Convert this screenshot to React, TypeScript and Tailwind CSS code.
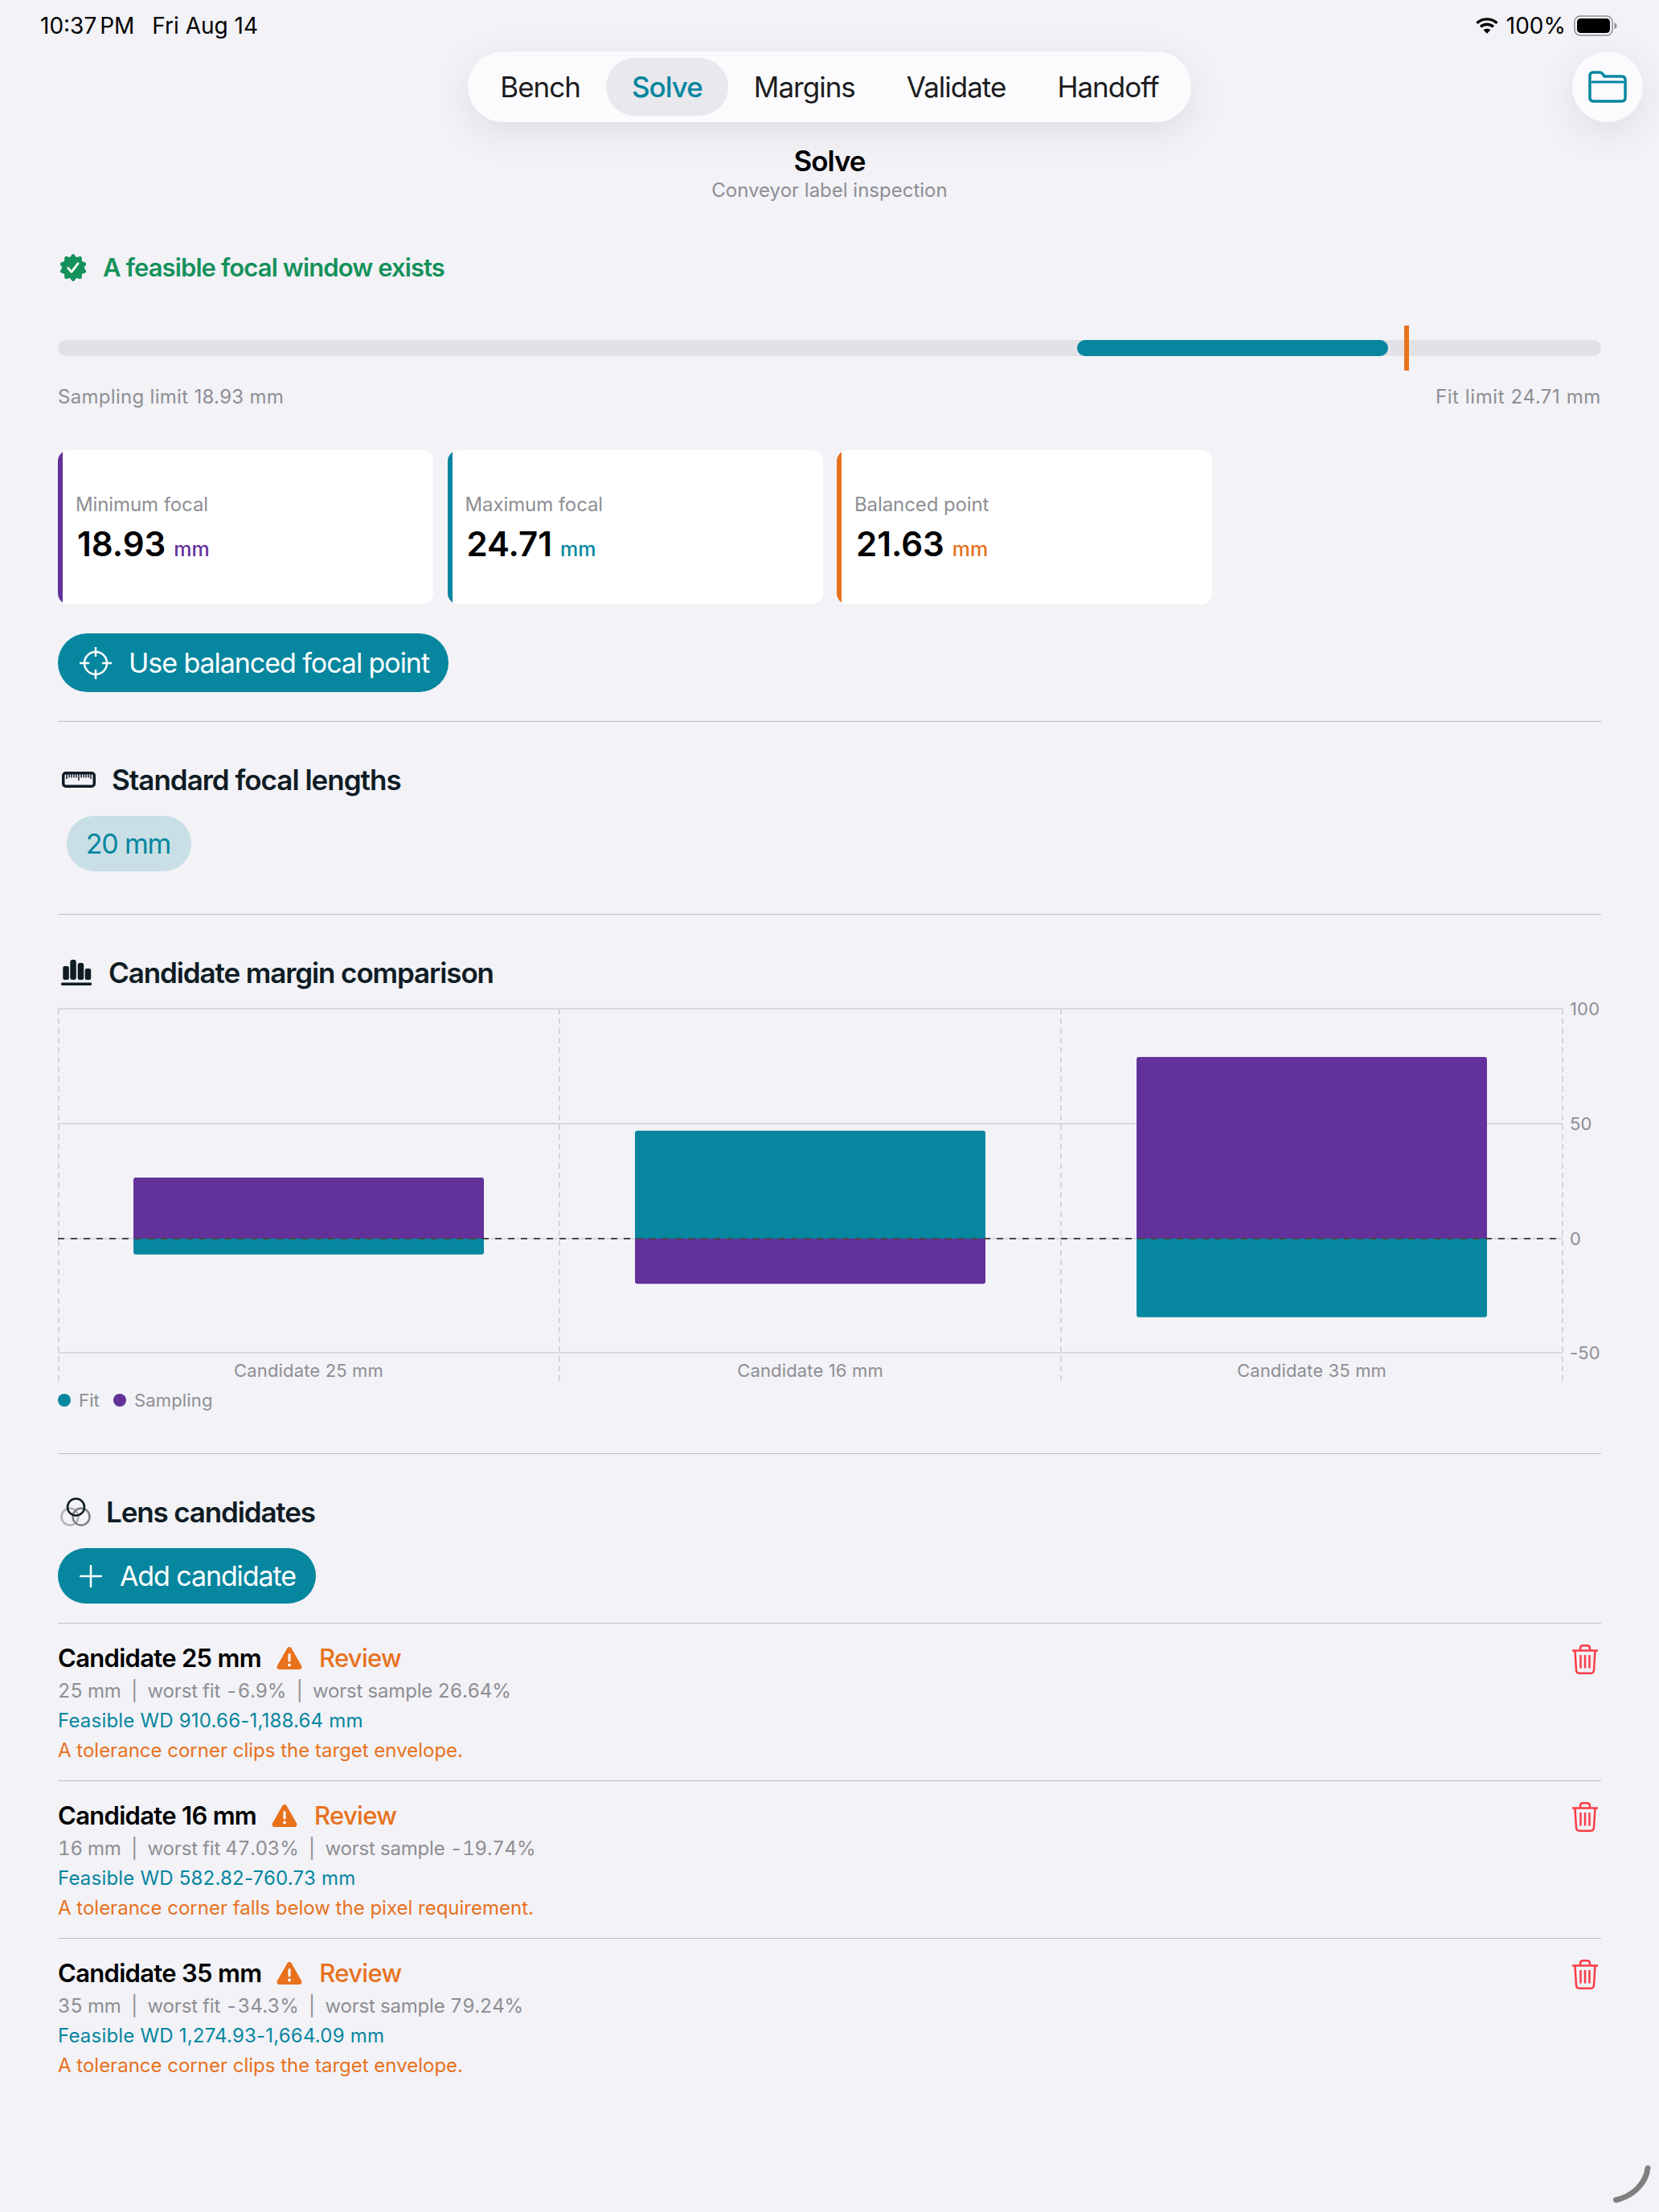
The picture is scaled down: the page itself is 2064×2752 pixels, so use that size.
const TEAL = "#06869f";
const PURPLE = "#63319a";

const tabs = ["Bench", "Solve", "Margins", "Validate", "Handoff"];

const focalCards = [
  { label: "Minimum focal", value: "18.93", strip: "bg-[#63319a]", unit: "text-[#63319a]" },
  { label: "Maximum focal", value: "24.71", strip: "bg-[#06869f]", unit: "text-[#06869f]" },
  { label: "Balanced point", value: "21.63", strip: "bg-[#e8711c]", unit: "text-[#e8711c]" },
];

const candidates = [
  {
    name: "Candidate 25 mm",
    detail: "25 mm  |  worst fit -6.9%  |  worst sample 26.64%",
    feasible: "Feasible WD 910.66-1,188.64 mm",
    note: "A tolerance corner clips the target envelope.",
  },
  {
    name: "Candidate 16 mm",
    detail: "16 mm  |  worst fit 47.03%  |  worst sample -19.74%",
    feasible: "Feasible WD 582.82-760.73 mm",
    note: "A tolerance corner falls below the pixel requirement.",
  },
  {
    name: "Candidate 35 mm",
    detail: "35 mm  |  worst fit -34.3%  |  worst sample 79.24%",
    feasible: "Feasible WD 1,274.93-1,664.09 mm",
    note: "A tolerance corner clips the target envelope.",
  },
];

const chartGroups = [
  { label: "Candidate 25 mm", x: 166, fit: -6.9, sampling: 26.64 },
  { label: "Candidate 16 mm", x: 790, fit: 47.03, sampling: -19.74 },
  { label: "Candidate 35 mm", x: 1414, fit: -34.3, sampling: 79.24 },
];

const ZERO_Y = 1541;
const PX_PER_UNIT = 2.853;

function barPath(x: number, value: number) {
  const w = 436;
  const r = 3;
  const h = Math.abs(value) * PX_PER_UNIT;
  if (value >= 0) {
    const top = ZERO_Y - h;
    return `M${x} ${ZERO_Y}V${top + r}Q${x} ${top} ${x + r} ${top}H${x + w - r}Q${x + w} ${top} ${x + w} ${top + r}V${ZERO_Y}Z`;
  }
  const bottom = ZERO_Y + h;
  return `M${x} ${ZERO_Y}V${bottom - r}Q${x} ${bottom} ${x + r} ${bottom}H${x + w - r}Q${x + w} ${bottom} ${x + w} ${bottom - r}V${ZERO_Y}Z`;
}

function MarginChart() {
  const ticks = [
    { label: "100", y: 1255 },
    { label: "50", y: 1398 },
    { label: "0", y: 1541 },
    { label: "-50", y: 1683 },
  ];
  return (
    <svg width="1920" height="480" viewBox="72 1240 1920 480" className="mt-[8px] block">
      {ticks.map((t) => (
        <line key={t.label} x1="72" x2="1944" y1={t.y} y2={t.y} stroke="#d1d1d6" strokeWidth="1.5" />
      ))}
      {[73, 696, 1320, 1944].map((x) => (
        <line key={x} x1={x} x2={x} y1="1255" y2="1718" stroke="#d5d5d9" strokeWidth="2" strokeDasharray="7 5" />
      ))}
      {chartGroups.map((g) => (
        <g key={g.label}>
          <path d={barPath(g.x, g.fit)} fill={TEAL} />
          <path d={barPath(g.x, g.sampling)} fill={PURPLE} />
          <text x={g.x + 218} y="1713" textAnchor="middle" fontSize="22" letterSpacing="0.15" fill="#8e8e93">
            {g.label}
          </text>
        </g>
      ))}
      <line x1="72" x2="1938" y1="1541" y2="1541" stroke="#48484a" strokeWidth="2" strokeDasharray="8 8" />
      {ticks.map((t) => (
        <text key={t.label} x="1953" y={t.y + 8} fontSize="22" letterSpacing="0.15" fill="#8e8e93">
          {t.label}
        </text>
      ))}
    </svg>
  );
}

// scalloped badge outline, ten lobes with one pointing up
const sealPoints = Array.from({ length: 120 }, (_, i) => {
  const a = (i / 120) * Math.PI * 2;
  const r = 15.3 + 1.6 * Math.cos(10 * a);
  return `${(17 + r * Math.sin(a)).toFixed(2)},${(17 - r * Math.cos(a)).toFixed(2)}`;
}).join(" ");

function SealIcon() {
  return (
    <svg width="34" height="34" viewBox="0 0 34 34" className="block">
      <polygon points={sealPoints} fill="#15915a" />
      <path
        d="M10.800 17.500L15 22.300L23 11.800"
        fill="none"
        stroke="#fff"
        strokeWidth="2.800"
        strokeLinecap="round"
        strokeLinejoin="round"
      />
    </svg>
  );
}

function FolderIcon() {
  return (
    <svg width="48" height="40" viewBox="0 0 48 40" fill="none" stroke="#06869f" strokeWidth="3.500">
      <path d="M2 6.500C2 3.500 3.500 2 6.500 2H14C16 2 17 2.600 18 4L20 7H41.500C44.500 7 46 8.500 46 11.500V33.500C46 36.500 44.500 38 41.500 38H6.500C3.500 38 2 36.500 2 33.500Z" />
      <path d="M5 14H43" strokeWidth="3" strokeLinecap="round" />
    </svg>
  );
}

function WifiIcon() {
  return (
    <svg width="28" height="20" viewBox="0 0 28 20" fill="none" stroke="#000" strokeWidth="3.400">
      <path d="M1.500 6.800C8.500 0.200 19.500 0.200 26.500 6.800" />
      <path d="M6 11.300C10.500 7.200 17.500 7.200 22 11.300" />
      <path d="M14 19.800L9.600 15.200C12 13.200 16 13.200 18.400 15.200Z" fill="#000" stroke="none" />
    </svg>
  );
}

function BatteryIcon() {
  return (
    <svg width="54" height="26" viewBox="0 0 54 26">
      <rect x="1" y="1" width="47" height="24" rx="7" fill="none" stroke="#8e8e93" strokeWidth="1.500" />
      <rect x="4" y="4" width="41" height="18" rx="4.500" fill="#000" />
      <path d="M50.500 9C52.500 9.800 53.500 11 53.500 13C53.500 15 52.500 16.200 50.500 17Z" fill="#8e8e93" />
    </svg>
  );
}

function CrosshairIcon() {
  return (
    <svg width="40" height="40" viewBox="0 0 40 40" fill="none" stroke="#fff" strokeWidth="2.500">
      <circle cx="20" cy="20" r="14" />
      <path d="M20 0V11M20 29V40M0 20H11M29 20H40" strokeLinecap="round" />
    </svg>
  );
}

function RulerIcon() {
  return (
    <svg width="42" height="20" viewBox="0 0 42 20" fill="none" stroke="#0f1c24">
      <rect x="1.750" y="1.750" width="38.500" height="16.500" rx="3" strokeWidth="3.500" />
      <path d="M6 3V9M9 3V7.500M12 3V7.500M15 3V7.500M18 3V7.500M21 3V11M24 3V7.500M27 3V7.500M30 3V7.500M33 3V7.500M36 3V9" strokeWidth="1.500" />
    </svg>
  );
}

function BarsIcon() {
  return (
    <svg width="38" height="32" viewBox="0 0 38 32" fill="#0f1c24">
      <rect x="2.300" y="8" width="7.500" height="17" rx="2" />
      <rect x="11.300" y="0" width="7.500" height="25" rx="3" />
      <rect x="20.700" y="4" width="7.500" height="21" rx="2.500" />
      <rect x="29.700" y="11" width="7.500" height="14" rx="2" />
      <rect x="0" y="28.500" width="38" height="3.500" rx="1.200" />
    </svg>
  );
}

function LensIcon() {
  return (
    <svg width="38" height="36" viewBox="0 0 38 36" fill="none" strokeWidth="2.500">
      <circle cx="12" cy="24" r="10.500" stroke="#b4b4b8" />
      <circle cx="26" cy="24" r="10.500" stroke="#808085" />
      <circle cx="19.500" cy="12" r="10.500" stroke="#0f1c24" />
    </svg>
  );
}

function WarningIcon() {
  return (
    <svg width="32" height="28" viewBox="0 0 32 28" className="block">
      <path
        d="M13.400 1.600C14.600 -0.400 17.400 -0.400 18.600 1.600L31 23.300C32.200 25.300 30.800 28 28.400 28H3.600C1.200 28 -0.200 25.300 1 23.300Z"
        fill="#e8711c"
      />
      <rect x="14.500" y="8" width="3" height="10.500" rx="1.500" fill="#fff" />
      <circle cx="16" cy="22.500" r="1.900" fill="#fff" />
    </svg>
  );
}

function TrashIcon() {
  return (
    <svg width="32" height="37" viewBox="0 0 32 37" fill="none" stroke="#fb3c44" strokeWidth="2.500">
      <path d="M0 7.500H32" />
      <path d="M10 7.500V5C10 2.500 11.500 1.300 13.500 1.300H18.500C20.500 1.300 22 2.500 22 5V7.500" />
      <path d="M3.500 7.500L5 32C5.200 34.500 6.500 35.700 9 35.700H23C25.500 35.700 26.800 34.500 27 32L28.500 7.500" />
      <path d="M10.500 13V29.500M16 13V29.500M21.500 13V29.500" />
    </svg>
  );
}

function PlusIcon() {
  return (
    <svg width="28" height="28" viewBox="0 0 28 28" stroke="#fff" strokeWidth="2.500" strokeLinecap="round">
      <path d="M14 1V27M1 14H27" />
    </svg>
  );
}

export default function App() {
  return (
    <div className="relative flex h-[2752px] w-[2064px] flex-col overflow-hidden bg-[#f2f2f7] font-['Inter',sans-serif]">
      {/* status bar */}
      <div className="flex h-[64px] items-center justify-between pl-[50px] pr-[52px] text-[28px] text-black">
        <div className="flex gap-[22px]">
          <span className="[word-spacing:-4px]">10:37 PM</span>
          <span>Fri Aug 14</span>
        </div>
        <div className="flex items-center gap-[10px]">
          <WifiIcon />
          <span>100%</span>
          <BatteryIcon />
        </div>
      </div>

      {/* tab bar */}
      <div className="grid grid-cols-[1fr_auto_1fr]">
        <div />
        <div className="flex h-[88px] items-center rounded-full bg-[#fbfbfe] p-[8px] shadow-[0_12px_48px_rgba(0,0,0,0.09)]">
          {tabs.map((tab) => (
            <div
              key={tab}
              className={`flex h-[72px] items-center rounded-full px-[32px] text-[35px] tracking-[-1px] ${
                tab === "Solve" ? "bg-[#e8e8ed] font-medium text-[#06869f]" : "text-[#1c1c1e]"
              }`}
            >
              {tab}
            </div>
          ))}
        </div>
        <div className="flex justify-end pr-[20px]">
          <div className="flex h-[88px] w-[88px] items-center justify-center rounded-full bg-[#fbfbfe] shadow-[0_12px_48px_rgba(0,0,0,0.09)]">
            <FolderIcon />
          </div>
        </div>
      </div>

      <div className="mt-[28px] flex flex-col items-center">
        <div className="h-[40px] text-[35px] font-semibold leading-[40px] tracking-[-1px] text-black">Solve</div>
        <div className="mt-[2px] text-[24px] leading-[30px] text-[#8e8e93]">Conveyor label inspection</div>
      </div>

      <div className="flex flex-col px-[72px]">
        <div className="mt-[61px] flex h-[40px] items-center">
          <span className="ml-[2px]">
            <SealIcon />
          </span>
          <span className="ml-[20px] text-[31px] font-semibold tracking-[-0.9px] text-[#15915a]">
            A feasible focal window exists
          </span>
        </div>

        <div className="relative mt-[70px] h-[20px] rounded-full bg-[#e2e2e6]">
          <div className="absolute left-[1268px] top-0 h-[20px] w-[387px] rounded-full bg-[#06869f]" />
          <div className="absolute left-[1675px] top-[-18px] h-[56px] w-[6px] bg-[#e8711c]" />
        </div>

        <div className="mt-[35px] flex justify-between text-[24px] leading-[32px] text-[#8e8e93]">
          <span className="tracking-[0.3px]">Sampling limit 18.93 mm</span>
          <span className="tracking-[0.6px]">Fit limit 24.71 mm</span>
        </div>

        <div className="mt-[50px] flex gap-[17.5px]">
          {focalCards.map((card) => (
            <div key={card.label} className="flex h-[192px] w-[467px] overflow-hidden rounded-[14px] bg-white">
              <div className={`w-[6px] shrink-0 ${card.strip}`} />
              <div className="flex flex-col justify-center pl-[16px]">
                <div className="text-[24px] leading-[36px] tracking-[-0.1px] text-[#8e8e93]">{card.label}</div>
                <div className="mt-[5px] flex items-baseline pl-[2px]">
                  <span className="text-[42px] font-semibold leading-[52px] text-black">{card.value}</span>
                  <span className={`ml-[10px] text-[25px] font-medium ${card.unit}`}>mm</span>
                </div>
              </div>
            </div>
          ))}
        </div>

        <div className="mt-[36px] flex h-[73px] w-[486px] items-center rounded-full bg-[#06869f] pl-[27px] text-white">
          <CrosshairIcon />
          <span className="ml-[21px] whitespace-nowrap text-[34px] tracking-[-1.05px]">Use balanced focal point</span>
        </div>

        <div className="mt-[36px] h-px bg-[#c0c0c4]" />

        <div className="mt-[50px] flex h-[44px] items-center pl-[5px]">
          <RulerIcon />
          <span className="ml-[20px] text-[35px] font-semibold tracking-[-1px] text-[#0f1c24]">
            Standard focal lengths
          </span>
        </div>

        <div className="ml-[11px] mt-[23px] flex h-[69px] w-[155px] items-center justify-center rounded-full bg-[#c8dfe6] pr-[2px] text-[34px] tracking-[-1.2px] text-[#06869f]">
          20 mm
        </div>

        <div className="mt-[53px] h-px bg-[#c0c0c4]" />

        <div className="mt-[50px] flex h-[44px] items-center pl-[4px]">
          <BarsIcon />
          <span className="ml-[21px] text-[35px] font-semibold tracking-[-1.1px] text-[#0f1c24]">
            Candidate margin comparison
          </span>
        </div>

        <MarginChart />

        <div className="mt-[6px] flex h-[32px] items-center text-[22px] tracking-[0.15px] text-[#8e8e93]">
          <span className="h-[16px] w-[16px] rounded-full bg-[#06869f]" />
          <span className="ml-[10px]">Fit</span>
          <span className="ml-[17px] h-[16px] w-[16px] rounded-full bg-[#63319a]" />
          <span className="ml-[10px]">Sampling</span>
        </div>

        <div className="mt-[50px] h-px bg-[#c0c0c4]" />

        <div className="mt-[50px] flex h-[44px] items-center pl-[3px]">
          <LensIcon />
          <span className="ml-[19px] text-[35px] font-semibold tracking-[-1.15px] text-[#0f1c24]">Lens candidates</span>
        </div>

        <div className="mt-[23px] flex h-[69px] w-[321px] items-center rounded-full bg-[#06869f] pl-[27px] text-white">
          <PlusIcon />
          <span className="ml-[22px] whitespace-nowrap text-[34px] tracking-[-1.1px]">Add candidate</span>
        </div>

        <div className="mt-[24px] flex flex-col">
          {candidates.map((c) => (
            <div key={c.name} className="border-t border-[#c0c0c4]">
              <div className="flex justify-between pb-[19px] pt-[23px]">
                <div className="flex flex-col">
                  <div className="flex h-[40px] items-center">
                    <span className="text-[31px] font-semibold tracking-[-0.7px] text-black">{c.name}</span>
                    <span className="ml-[19px]">
                      <WarningIcon />
                    </span>
                    <span className="ml-[21px] text-[31px] font-medium tracking-[-0.7px] text-[#e8711c]">Review</span>
                  </div>
                  <div className="mt-[2px] whitespace-pre text-[24px] leading-[37px] tracking-[-0.18px] tabular-nums text-[#8e8e93]">
                    {c.detail}
                  </div>
                  <div className="text-[24px] leading-[37px] tracking-[0.2px] text-[#06869f]">{c.feasible}</div>
                  <div className="text-[24px] leading-[37px] text-[#e8711c]">{c.note}</div>
                </div>
                <div className="pr-[4px] pt-[3px]">
                  <TrashIcon />
                </div>
              </div>
            </div>
          ))}
        </div>
      </div>

      {/* scroll corner indicator */}
      <svg width="48" height="48" viewBox="0 0 48 48" fill="none" className="absolute bottom-[10px] right-[9px]">
        <path d="M43 3.500C41 21 26 38 3.500 43" stroke="#808080" strokeWidth="7" strokeLinecap="round" />
      </svg>
    </div>
  );
}
